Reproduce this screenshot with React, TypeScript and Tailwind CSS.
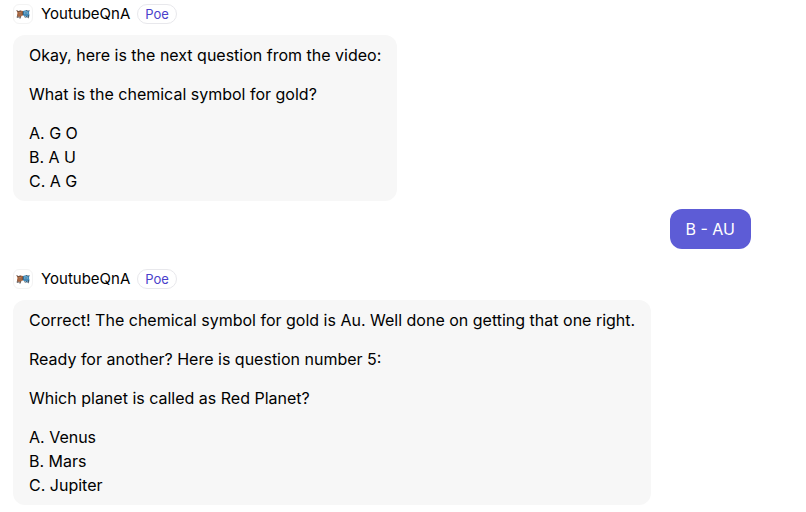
import React from 'react';

const BotIcon = () => (
  <svg className="w-3.5 h-2.5" viewBox="0 0 28 20" fill="none" aria-hidden="true">
    <path d="M1 3l4 1 4-1 5 1v9l-4 1-1 4-3-3-3 2-1-5 1-4z" fill="#a8653f" />
    <path d="M27 3l-3 1-3-2-7 2v9l3 1 3 1 1 3 2-3 3 2 1-5-1-4z" fill="#4189b8" />
    <path d="M1 3l4 2 5-1M3 13l-1 4 4-1 2 3 2-5M27 3l-3 1-4-1M25 12v6l-4-3-3 2-1-3" stroke="#3b4046" strokeWidth="1.2" />
    <path d="M17 5h6v5h-6z" fill="#7dc0e6" />
    <path d="M6 7h4v4H6z" fill="#d08a5c" />
    <path d="M20 6v4M8 8v3M14 5v7" stroke="#2b3b47" strokeWidth="1.4" />
  </svg>
);

const BotHeader = () => (
  <div className="flex items-center h-5">
    <div className="w-5 h-5 flex items-center justify-center rounded-md border border-[#f3f3f3] bg-white">
      <BotIcon />
    </div>
    <span className="ml-2 text-[15px] leading-5">YoutubeQnA</span>
    <span className="ml-[7px] px-[7px] h-5 flex items-center rounded-full border border-[#e8e8ec] text-[13px] leading-4 text-[#4a3fcb]">Poe</span>
  </div>
);

const BotMessage: React.FC<{ paragraphs: string[]; options: string[] }> = ({ paragraphs, options }) => (
  <article className="flex flex-col items-start gap-[11px]">
    <BotHeader />
    <div className="rounded-xl bg-[#f7f7f7] px-4 py-2 space-y-[15px]">
      {paragraphs.map((text) => (
        <p key={text}>{text}</p>
      ))}
      <div>
        {options.map((option) => (
          <p key={option}>{option}</p>
        ))}
      </div>
    </div>
  </article>
);

const App: React.FC = () => {
  return (
    <main className="bg-white pt-1 pb-2 pl-[13px] pr-[55px] font-['Inter','Liberation_Sans',sans-serif] text-base leading-6 text-black">
      <BotMessage
        paragraphs={['Okay, here is the next question from the video:', 'What is the chemical symbol for gold?']}
        options={['A. G O', 'B. A U', 'C. A G']}
      />

      {/* User reply */}
      <div className="flex justify-end mt-2 mb-5">
        <p className="rounded-xl bg-[#5d5cd6] px-4 py-2 text-white">B - AU</p>
      </div>

      <BotMessage
        paragraphs={[
          'Correct! The chemical symbol for gold is Au. Well done on getting that one right.',
          'Ready for another? Here is question number 5:',
          'Which planet is called as Red Planet?',
        ]}
        options={['A. Venus', 'B. Mars', 'C. Jupiter']}
      />
    </main>
  );
};

export default App;
